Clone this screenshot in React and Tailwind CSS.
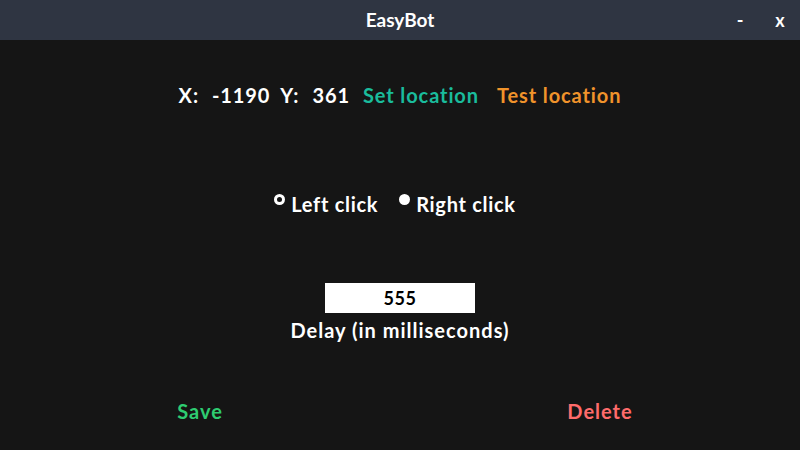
export default function App() {
  return (
    <div className="w-[800px] h-[450px] bg-[#151515] text-white flex flex-col font-['Lato',sans-serif]">
      <header className="h-[40px] bg-[#2f3542] flex items-center relative shrink-0">
        <div className="flex-1 text-center text-[19px] font-bold">EasyBot</div>
        <div className="absolute right-0 top-0 h-[40px] flex items-center text-[18px] font-bold">
          <span className="w-[40px] text-center">-</span>
          <span className="w-[40px] text-center">x</span>
        </div>
      </header>

      <section className="mt-[43px] h-[24px] flex items-center justify-center text-[20px] font-bold leading-none tracking-[0.9px]">
        <span>X:</span>
        <span className="ml-[13px]">-1190</span>
        <span className="ml-[10px]">Y:</span>
        <span className="ml-[13px]">361</span>
        <span className="ml-[13px] text-[#1abc9c]">Set location</span>
        <span className="ml-[18px] text-[#f0932b]">Test location</span>
      </section>

      <section className="mt-[85px] h-[24px] pr-[10px] flex items-center justify-center text-[20px] font-bold leading-none tracking-[0.7px]">
        <label className="flex items-center">
          <span className="w-[11px] h-[11px] rounded-full bg-white flex items-center justify-center -translate-y-[5px]">
            <span className="w-[5px] h-[5px] rounded-full bg-[#151515]" />
          </span>
          <span className="ml-[6px]">Left click</span>
        </label>
        <label className="flex items-center ml-[21px]">
          <span className="w-[11px] h-[11px] rounded-full bg-white -translate-y-[5px]" />
          <span className="ml-[6px]">Right click</span>
        </label>
      </section>

      <div className="mt-[67px] flex justify-center">
        <div className="w-[150px] h-[30px] bg-white text-black flex items-center justify-center text-[18px] font-bold tracking-[0.5px]">
          555
        </div>
      </div>
      <div className="mt-[5px] h-[24px] flex items-center justify-center text-[20px] font-bold leading-none tracking-[1px]">
        Delay (in milliseconds)
      </div>

      <footer className="mt-[57px] h-[24px] grid grid-cols-2 text-[20px] font-bold leading-none tracking-[1px]">
        <div className="flex items-center justify-center text-[#2ecc71]">Save</div>
        <div className="flex items-center justify-center text-[#ff6b6b]">Delete</div>
      </footer>
    </div>
  );
}
